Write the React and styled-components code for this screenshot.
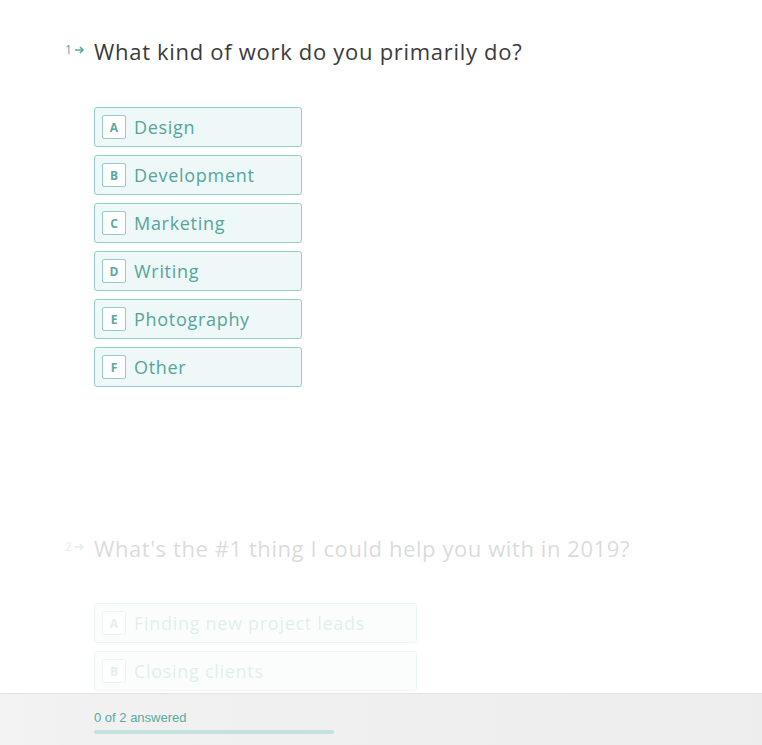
import React from "react";
import styled, { createGlobalStyle } from "styled-components";

const GlobalStyle = createGlobalStyle`
  html, body {
    margin: 0;
    padding: 0;
    background: #fff;
    font-family: "Open Sans", "Liberation Sans", sans-serif;
    overflow: hidden;
  }
`;

const Page = styled.div`
  height: 745px;
  overflow: hidden;
  padding-top: 36px;
  box-sizing: border-box;
`;

const Question = styled.section`
  padding-left: 94px;
  opacity: ${({ $faded }) => ($faded ? 0.18 : 1)};
  margin-bottom: ${({ $gap }) => $gap || 0}px;
`;

const Title = styled.h2`
  position: relative;
  margin: 0;
  font-size: 22px;
  font-weight: 400;
  line-height: 30px;
  color: #3b3b3b;
  letter-spacing: ${({ $spacing }) => $spacing || 0.7}px;
`;

const Counter = styled.span`
  position: absolute;
  left: -29px;
  top: 7px;
  display: flex;
  align-items: center;
  gap: 2px;
  font-size: 12px;
  color: #5aa9a0;
  line-height: 14px;
  letter-spacing: 0;
`;

const Options = styled.div`
  display: flex;
  flex-direction: column;
  gap: 8px;
  margin-top: ${({ $top }) => $top}px;
`;

const Option = styled.div`
  display: flex;
  align-items: center;
  gap: 8px;
  width: ${({ $w }) => $w}px;
  height: 40px;
  box-sizing: border-box;
  padding: 0 7px;
  background: #eef8f8;
  border: 1px solid #93cdc6;
  border-radius: 3px;
  color: #55a59c;
  font-size: 18px;
  letter-spacing: 0.7px;
`;

const Key = styled.span`
  display: flex;
  align-items: center;
  justify-content: center;
  width: 24px;
  height: 24px;
  box-sizing: border-box;
  background: #fff;
  border: 1px solid #93cdc6;
  border-radius: 2px;
  font-size: 12px;
  font-weight: 700;
  color: #5aa9a0;
  letter-spacing: 0;
`;

const Footer = styled.footer`
  position: fixed;
  left: 0;
  right: 0;
  bottom: 0;
  height: 52px;
  box-sizing: border-box;
  padding: 16px 0 0 94px;
  background: linear-gradient(90deg, #f3f3f3 0%, #f1f1f1 10%, #ededed 100%);
  border-top: 1px solid #e2e2e2;
`;

const Answered = styled.div`
  font-family: "Liberation Sans", Arial, sans-serif;
  font-size: 13px;
  color: #5aa9a0;
  line-height: 16px;
`;

const Track = styled.div`
  margin-top: 4px;
  width: 240px;
  height: 4px;
  border-radius: 2px;
  background: #c3e1de;
`;

const Arrow = () => (
  <svg width="11" height="10" viewBox="0 0 11 10" fill="none">
    <path d="M1 5h8M6 2l3 3-3 3" stroke="#5aa9a0" strokeWidth="1.6" />
  </svg>
);

const q1 = ["Design", "Development", "Marketing", "Writing", "Photography", "Other"];
const q2 = ["Finding new project leads", "Closing clients"];
const letters = "ABCDEF";

export default function App() {
  return (
    <Page>
      <GlobalStyle />
      <Question $gap={146}>
        <Title>
          <Counter>
            1 <Arrow />
          </Counter>
          What kind of work do you primarily do?
        </Title>
        <Options $top={41}>
          {q1.map((t, i) => (
            <Option key={t} $w={208}>
              <Key>{letters[i]}</Key>
              {t}
            </Option>
          ))}
        </Options>
      </Question>
      <Question $faded>
        <Title $spacing={0.58}>
          <Counter>
            2 <Arrow />
          </Counter>
          What's the #1 thing I could help you with in 2019?
        </Title>
        <Options $top={40}>
          {q2.map((t, i) => (
            <Option key={t} $w={323}>
              <Key>{letters[i]}</Key>
              {t}
            </Option>
          ))}
        </Options>
      </Question>
      <Footer>
        <Answered>0 of 2 answered</Answered>
        <Track />
      </Footer>
    </Page>
  );
}
